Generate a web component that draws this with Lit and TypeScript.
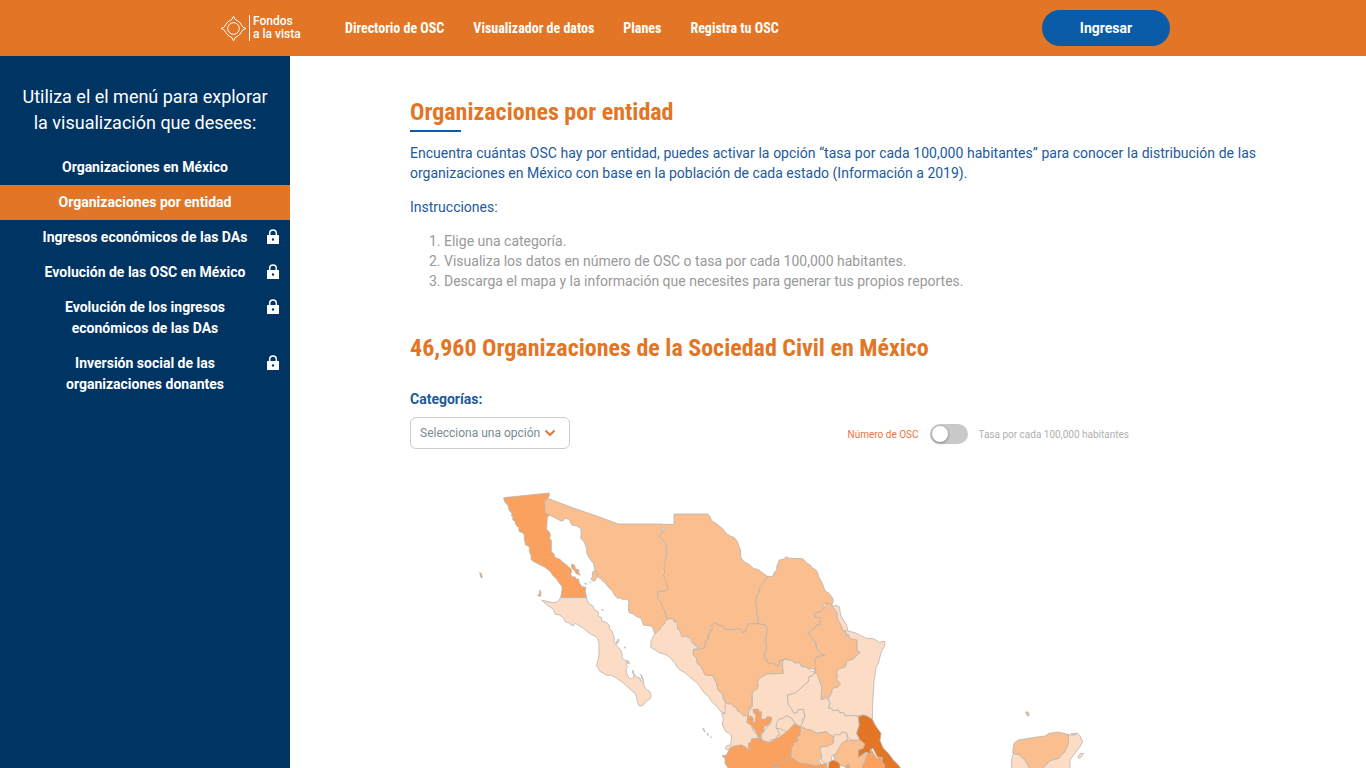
import { LitElement, html, svg, css, nothing } from "lit";
import { customElement, state } from "lit/decorators.js";

type Region = { name: string; level: string; points: string };
type Sheet = { x: number; y: number; regions: Region[] };

// Each sheet of the map keeps its own local origin; one map unit is a third of a pixel.
const SHEETS: Sheet[] = [
  {
    x: 0, y: 0,
    regions: [
      { name: "Base norte", level: "mid base", points: "720,480 750,450 765,428 790,430 865,420 915,430 930,520 970,545 960,580 860,580 760,520" },
      { name: "Base centro", level: "low base", points: "875,635 850,708 810,720 860,800 960,790 1010,730 1100,755 1190,770 1200,710 1090,660 1060,580 900,600" },
      { name: "Sonora", level: "mid", points: "263,55 340,84 410,108 475,132 605,132 608,140 605,150 608,157 600,165 599,172 605,175 608,182 617,188 620,195 618,205 622,208 618,225 620,240 616,243 618,258 614,270 619,290 617,300 622,315 626,328 615,331 603,334 593,336 593,345 600,352 603,364 610,375 613,392 618,400 619,411 624,417 617,424 612,433 602,441 600,448 592,455 585,462 581,453 578,441 568,437 550,435 548,428 543,415 528,409 520,402 507,398 505,380 507,362 500,358 487,358 480,354 473,355 465,347 457,333 448,325 440,315 434,307 427,303 425,298 412,290 405,270 400,250 392,240 385,230 380,218 380,205 372,185 362,175 364,160 362,145 350,138 335,135 330,122 325,117 315,115 310,122 303,123 284,113 268,105 258,102 254,92 252,68" },
      { name: "Baja California", level: "high", points: "131,53 200,46 268,39 268,47 263,55 255,61 252,68 256,80 254,92 258,100 268,105 262,112 261,125 260,148 268,156 271,165 269,176 274,180 274,215 282,222 284,230 290,235 300,238 308,247 320,255 326,262 332,265 335,274 332,283 337,291 345,290 348,297 355,297 358,309 366,320 377,322 376,335 380,353 302,353 306,330 306,320 298,310 290,297 280,288 270,274 255,262 235,252 218,243 213,238 213,225 208,215 208,200 197,195 193,180 193,165 188,158 178,155 176,143 167,134 165,124 158,120 159,110 153,106 157,102 147,90 145,78 138,70 134,66" },
      { name: "Isla Ángel de la Guarda", level: "high", points: "334,254 339,252 345,259 345,266 356,269 357,283 361,286 348,280 344,272 336,265" },
      { name: "Isla Tiburón", level: "mid", points: "400,273 410,275 412,288 407,299 403,304 393,299 397,290 397,278" },
      { name: "Isla Guadalupe", level: "high", points: "59,278 64,280 67,293 63,293" },
      { name: "Isla Cedros", level: "high", points: "240,330 243,338 241,350 233,346 238,342" },
      { name: "Isla San Esteban", level: "mid", points: "374,309 380,312 377,313" },
      { name: "Isla San Pedro", level: "mid", points: "390,305 392,307 390,308" },
      { name: "Isla Tortuga", level: "low", points: "426,388 429,389 428,392" },
      { name: "Baja California Sur", level: "low", points: "302,353 380,353 382,363 386,370 400,379 402,388 415,396 415,408 425,413 424,422 440,428 449,438 448,445 457,455 462,470 463,485 472,500 481,508 486,520 486,533 500,545 499,555 503,560 498,568 500,580 506,593 515,597 522,591 521,580 530,591 540,594 542,603 550,604 552,617 558,628 570,635 573,648 569,658 558,664 551,674 543,678 536,676 532,664 530,652 525,640 515,632 500,618 485,605 470,595 455,586 440,586 430,580 418,573 415,565 409,557 414,540 417,525 417,490 412,475 405,468 390,461 370,445 350,432 345,430 341,437 335,436 325,428 316,425 310,415 300,405 286,403 280,388 262,375 250,365 245,361 280,368 293,365" },
      { name: "Isla Carmen", level: "low", points: "475,477 478,480 474,487 471,492 469,486" },
      { name: "Isla Monserrat", level: "low", points: "493,500 496,502 495,505" },
      { name: "Isla San José", level: "low", points: "500,540 506,543 508,551 503,550" },
      { name: "Isla Espíritu Santo", level: "low", points: "517,570 521,575 519,581" },
      { name: "Isla Cerralvo", level: "low", points: "542,583 547,591 550,602 545,594" },
    ],
  },
  {
    x: 540, y: 60,
    regions: [
      { name: "Chihuahua", level: "mid", points: "102,42 204,42 210,50 215,62 230,71 250,88 258,99 270,108 282,112 292,124 296,138 302,150 302,170 307,180 315,187 327,193 340,205 355,209 382,229 370,248 360,262 356,278 347,295 349,312 352,320 350,330 352,348 357,355 352,373 340,371 325,372 322,381 318,385 316,395 308,398 304,390 293,386 283,390 270,392 262,388 254,388 250,380 238,377 225,368 217,374 212,382 211,395 203,405 203,416 198,420 195,445 184,447 172,443 170,435 159,431 155,415 140,410 125,412 122,405 114,402 112,390 108,386 109,368 102,366 102,357 95,355 91,359 85,355 78,355 78,345 72,328 67,324 64,308 53,295 52,276 70,274 85,268 84,260 78,250 75,235 70,228 74,215 72,205 76,190 75,180 80,170 78,150 80,143 76,125 67,119 60,110 59,102 69,97 67,90 74,94 70,85 63,77 67,73 102,73" },
    ],
  },
  {
    x: 660, y: 420,
    regions: [
      { name: "Sinaloa", level: "low", points: "-36,-3 -24,-4 -20,-2 -18,6 -10,5 -7,18 -8,27 0,32 5,50 18,48 30,55 35,66 44,75 55,85 42,88 40,105 50,114 52,130 64,141 75,163 98,167 109,188 114,210 127,220 130,238 140,250 142,258 135,280 122,275 113,262 95,245 86,230 72,218 60,200 50,188 30,172 15,158 0,150 -8,142 -15,130 -30,112 -42,104 -65,97 -75,89 -88,82 -87,63 -78,45 -75,42 -68,35 -60,28 -58,21 -48,13 -43,4" },
      { name: "Coahuila", level: "mid", points: "262,-131 278,-131 284,-145 291,-149 290,-160 298,-180 312,-183 318,-190 328,-185 368,-184 380,-172 390,-165 398,-156 408,-150 413,-143 415,-132 425,-115 435,-88 447,-80 458,-66 460,-55 455,-45 440,-52 430,-45 430,-32 421,-25 405,-20 405,-8 420,-10 422,2 420,15 409,16 405,24 395,30 385,38 395,50 400,60 407,65 410,85 422,101 435,105 422,111 410,110 404,125 410,135 408,155 399,147 385,145 375,140 365,140 357,128 345,129 335,122 315,118 300,120 295,140 280,130 265,130 252,100 260,90 257,60 262,25 255,15 232,10 237,-5 230,-15 230,-30 227,-65 236,-80 240,-98 250,-109" },
      { name: "Nuevo León", level: "mid", points: "440,-52 450,-50 455,-43 465,-30 472,-20 470,-8 477,0 485,20 488,32 498,32 497,45 505,43 510,56 531,60 531,92 541,97 532,103 520,117 500,123 497,140 477,147 470,155 472,165 470,180 482,190 474,201 457,205 455,220 442,234 432,232 430,238 423,238 425,200 413,170 405,160 408,135 404,125 410,110 435,105 422,101 410,85 407,65 400,60 385,38 395,30 405,24 409,16 420,15 422,-8 405,-8 405,-20 421,-25 430,-32" },
      { name: "Tamaulipas", level: "low", points: "455,-45 460,-42 468,-44 478,-40 482,-15 488,-3 500,15 503,33 525,38 545,48 560,55 580,56 600,68 605,64 615,65 613,80 604,95 595,130 588,142 582,185 580,220 578,250 577,298 560,288 550,285 530,288 515,286 495,288 490,277 480,279 475,270 459,272 455,265 445,265 450,250 445,235 455,220 457,205 474,201 482,190 470,180 472,165 470,155 477,147 497,140 500,123 520,117 541,97 531,92 531,60 510,56 505,43 497,45 498,32 488,32 485,20 472,-5 472,-20" },
      { name: "Durango", level: "mid", points: "40,88 57,89 75,82 76,66 84,59 90,35 97,30 95,15 105,8 118,17 130,17 134,28 150,28 163,30 173,26 184,30 188,38 196,35 198,25 202,21 205,12 232,11 255,15 262,25 257,60 260,90 252,100 251,115 265,130 280,130 295,140 300,125 312,118 308,143 310,160 260,162 240,174 232,185 235,198 230,208 217,217 215,260 205,265 208,272 205,285 190,288 181,277 172,273 170,265 160,260 154,250 145,253 136,245 132,238 130,225 119,214 114,210 109,188 98,167 75,165 64,141 52,130 50,114 40,105" },
      { name: "Zacatecas", level: "low", points: "308,123 315,118 335,122 345,129 357,128 365,140 375,140 385,145 395,154 404,155 397,168 387,170 385,185 360,207 345,220 322,225 325,255 335,266 340,278 350,280 355,268 370,268 375,290 365,300 370,310 362,322 345,310 335,295 320,287 309,295 297,298 295,310 288,320 300,345 292,347 285,358 270,360 268,368 245,360 245,345 260,322 270,315 274,294 262,290 255,298 245,298 240,275 235,268 221,270 205,265 217,260 217,217 230,208 235,198 232,185 240,174 260,162 310,160 308,143" },
      { name: "San Luis Potosí", level: "low", points: "404,158 413,165 419,185 425,200 423,238 432,238 442,234 450,250 445,265 455,265 459,272 475,270 480,279 490,277 495,288 515,286 540,290 535,305 538,315 530,340 540,360 520,361 505,355 500,340 487,335 480,345 465,345 460,350 450,345 440,335 410,340 395,331 380,328 362,320 375,290 370,268 355,268 350,280 340,278 335,266 325,255 322,225 345,220 385,185 387,170 397,168" },
      { name: "Aguascalientes", level: "low", points: "288,325 290,308 297,298 309,295 320,287 335,295 345,310 335,320 328,331 320,335 300,326" },
      { name: "Nayarit", level: "low", points: "136,245 145,253 154,250 160,260 170,265 172,273 181,277 190,288 205,285 201,308 213,315 220,333 235,345 231,355 215,357 213,367 205,370 208,392 200,383 185,375 165,378 155,380 146,390 136,387 140,377 152,375 155,350 148,340 138,335 132,325 127,315 130,295 125,280 135,280" },
      { name: "Michoacán", level: "high", points: "275,435 300,430 305,425 320,418 333,410 345,420 375,430 405,437 440,430 450,500 250,500" },
      { name: "Jalisco", level: "high", points: "126,408 140,404 150,384 165,378 185,375 200,383 208,392 205,370 213,367 215,357 240,355 255,365 268,368 285,358 300,350 320,335 335,320 345,312 362,320 360,345 350,351 355,362 342,370 335,385 333,410 320,418 300,430 275,435 295,442 290,500 160,500 145,445 135,430 135,415" },
      { name: "Jalisco Norte", level: "high", points: "202,290 213,287 220,295 218,305 225,307 228,285 220,278 221,268 235,268 235,277 245,275 242,298 255,298 262,290 275,292 273,305 260,318 252,318 250,335 242,340 241,355 234,350 225,330 214,315 202,308" },
      { name: "Guanajuato", level: "mid", points: "362,320 380,328 395,331 410,340 440,335 450,345 462,350 458,360 460,370 445,378 422,382 425,390 428,405 418,422 425,434 405,437 375,430 360,430 345,420 333,410 335,385 342,370 355,362 350,351 360,345" },
      { name: "Querétaro", level: "low", points: "462,350 467,342 480,345 487,335 500,340 503,360 488,368 485,382 473,390 470,400 455,408 455,425 440,431 425,425 425,410 420,382 445,378 460,370" },
      { name: "Hidalgo", level: "mid", points: "485,370 503,360 530,362 540,360 555,372 550,385 536,390 535,412 555,400 568,405 560,420 545,445 510,447 480,435 465,420 460,407 470,400 473,390" },
      { name: "Estado de México", level: "top", points: "447,427 460,420 475,427 480,435 477,500 440,500" },
      { name: "Tlaxcala", level: "high", points: "498,437 506,432 512,447 512,500 495,500" },
      { name: "Puebla", level: "high", points: "560,405 575,390 584,405 590,415 603,410 606,425 614,435 610,500 545,500 548,435 555,425" },
      { name: "Veracruz", level: "top", points: "535,290 550,285 560,288 577,298 585,315 603,340 600,362 610,385 625,400 640,420 655,435 680,470 705,500 610,500 614,435 606,425 607,412 592,411 584,395 579,385 570,390 572,401 557,397 535,412 536,390 550,385 555,372 540,360 530,340 538,315" },
      { name: "Islas Marías 1", level: "low", points: "68,325 72,328 76,335 72,333" },
      { name: "Islas Marías 2", level: "low", points: "81,340 85,342 84,347" },
      { name: "Islas Marías 3", level: "low", points: "92,350 95,352 93,353" },
    ],
  },
  {
    x: 1590, y: 630,
    regions: [
      { name: "Quintana Roo", level: "low", points: "235,133 242,136 258,134 260,129 270,137 273,145 278,155 270,170 255,190 243,205 240,215 240,232 245,270 160,270 160,234 180,212 205,205 220,190 233,165" },
      { name: "Campeche", level: "low", points: "70,190 85,192 105,210 118,232 122,270 62,270 65,225 65,210" },
      { name: "Yucatán", level: "mid", points: "72,160 85,150 103,147 135,142 165,138 178,130 205,126 220,130 235,133 235,160 225,185 215,193 207,205 193,206 180,212 168,222 163,225 160,234 160,270 120,270 118,232 108,216 103,207 97,203 88,192 78,193 68,188" },
      { name: "Isla Holbox", level: "low", points: "242,132 258,130 252,133" },
      { name: "Cozumel", level: "low", points: "265,199 270,191 281,190 272,203 266,205" },
      { name: "Arrecife Alacranes", level: "mid", points: "107,66 115,66 118,75 114,79 109,73" },
    ],
  },
];

const MENU = [
  { text: "Organizaciones en México", locked: false },
  { text: "Organizaciones por entidad", locked: false, active: true },
  { text: "Ingresos económicos de las DAs", locked: true },
  { text: "Evolución de las OSC en México", locked: true },
  { text: "Evolución de los ingresos económicos de las DAs", locked: true },
  { text: "Inversión social de las organizaciones donantes", locked: true },
];

@customElement("mexico-map")
export class MexicoMap extends LitElement {
  static styles = css`
    :host { display: block; }
    .map { display: block; width: 100%; height: auto; overflow: visible; }
    .region { stroke: #b9b4b0; stroke-width: 2.4; stroke-linejoin: round; }
    .base { stroke: none; }
    .low { fill: #fcdcc4; }
    .mid { fill: #fbbe8f; }
    .high { fill: #fba15f; }
    .top { fill: #e27626; }
  `;
  render() {
    return html`<svg class="map" viewBox="-150 0 2538 900" role="img" aria-label="Mapa de México">
      ${SHEETS.map((s) => svg`<g transform="translate(${s.x} ${s.y})">
        ${s.regions.map((r) => svg`<polygon class="region ${r.level}" points=${r.points} />`)}
      </g>`)}
    </svg>`;
  }
}

@customElement("app-root")
export class AppRoot extends LitElement {
  @state() private perCapita = false;

  static styles = css`
    :host {
      display: flex; flex-direction: column; height: 100vh; overflow: hidden;
      font-family: Roboto, "Liberation Sans", sans-serif; font-size: 14px; color: #999; background: #fff;
    }
    * { box-sizing: border-box; }
    a { color: inherit; text-decoration: none; }
    .header {
      display: flex; align-items: center; flex: none; height: 56px;
      padding: 0 196px 0 220px; background: #e27626; color: #fff;
    }
    .logo { display: flex; align-items: center; width: 125px; flex: none; }
    .mark { display: block; width: 28px; height: 28px; flex: none; }
    .brand { border-left: 1px solid #fff; margin-left: 1px; padding-left: 3px; font-size: 12px; line-height: 13px; font-weight: 500; white-space: nowrap; }
    .nav { display: flex; gap: 29px; flex: 1; font: 700 14px/20px "Roboto Condensed", Roboto, sans-serif; white-space: nowrap; }
    .enter {
      width: 128px; height: 36px; border: 0; border-radius: 18px; background: #0a5ba8; color: #fff;
      font: 700 14px/20px Roboto, sans-serif; cursor: pointer;
    }
    .body { display: flex; flex: 1; min-height: 0; }
    .side { width: 290px; flex: none; background: #003462; color: #fff; text-align: center; padding-top: 28px; }
    .lead { margin: 0 16px 14px; font-size: 18px; line-height: 26px; }
    .menu { list-style: none; margin: 0; padding: 0; }
    .item { display: grid; grid-template-columns: 1fr 14px; padding: 7px 10px 7px 0; font-weight: 700; line-height: 21px; }
    .item.active { background: #e27626; }
    .link { padding: 0 22px 0 46px; text-wrap: balance; }
    .link.full { padding: 0 12px 0 36px; }
    .lock { width: 14px; height: 16px; margin-top: 2px; }
    .main { flex: 1; min-width: 0; overflow-y: auto; scrollbar-width: none; padding: 0 110px 0 120px; }
    .content { max-width: 1000px; padding-top: 41px; }
    .title { margin: 0; color: #e27626; font: 700 24px/30px "Roboto Condensed", Roboto, sans-serif; }
    .rule { width: 51px; height: 2px; border: 0; margin: 3px 0 11px; background: #0a5ba8; }
    .text { margin: 0 0 14px; color: #1c5a9c; line-height: 20px; text-align: justify; }
    .steps { margin: 0 0 42px; padding-left: 34px; line-height: 20px; }
    .controls { display: flex; justify-content: space-between; align-items: flex-end; margin: 26px 0 31px; padding-right: 127px; }
    .field { display: flex; flex-direction: column; gap: 8px; }
    .label { font-weight: 700; line-height: 20px; color: #1c5a9c; }
    .pick { display: grid; width: 160px; }
    .select {
      grid-area: 1 / 1; height: 32px; appearance: none; border: 1px solid #ccc; border-radius: 6px; background: #fff;
      padding: 0 9px; color: #7b8a92; font: 12px/16px Roboto, sans-serif;
    }
    .chevron { grid-area: 1 / 1; width: 12px; height: 8px; align-self: center; justify-self: end; margin-right: 14px; pointer-events: none; }
    .switch { display: flex; align-items: center; gap: 11px; height: 30px; font-size: 10px; color: #b0b0b0; }
    .on { color: #e8743b; }
    .toggle {
      appearance: none; width: 38px; height: 20px; margin: 0; border-radius: 10px; background: #c9c9c9; display: flex;
      align-items: center; padding: 0 2px; cursor: pointer;
    }
    .toggle::before { content: ""; width: 16px; height: 16px; border-radius: 50%; background: #fff; box-shadow: 0 1px 3px #0006; }
    .toggle:checked { justify-content: flex-end; }
  `;

  private lock() {
    return html`<svg class="lock" viewBox="0 0 14 16" aria-hidden="true">
      <path d="M3.7 7V4.300a3.300 3.300 0 0 1 6.600 0V7" fill="none" stroke="#fff" stroke-width="1.500" />
      <path fill="#fff" fill-rule="evenodd" d="M1.500 6h11q.5 0 .5.5v8q0 .5-.5.5h-11q-.5 0-.5-.5v-8q0-.5.5-.5zM7 9.300a1.200 1.200 0 1 0 0 2.400A1.200 1.200 0 0 0 7 9.300z" />
    </svg>`;
  }

  render() {
    return html`
      <header class="header">
        <a class="logo" href="#">
          <svg class="mark" viewBox="0 0 28 28" fill="none" stroke="#fff" aria-hidden="true">
            <circle cx="13.5" cy="14.5" r="5.800" />
            <path d="M13.500 2.200Q14.300 5.800 17.500 6.800A8.800 8.800 0 0 1 21.200 10.500Q22.200 13.700 25.800 14.500Q22.200 15.300 21.200 18.500A8.800 8.800 0 0 1 17.500 22.200Q14.300 23.200 13.500 26.800Q12.700 23.200 9.500 22.200A8.800 8.800 0 0 1 5.800 18.500Q4.800 15.300 1.200 14.500Q4.800 13.700 5.800 10.500A8.800 8.800 0 0 1 9.500 6.800Q12.700 5.800 13.500 2.200z" />
          </svg>
          <span class="brand">Fondos<br />a la vista</span>
        </a>
        <nav class="nav">
          <a href="#">Directorio de OSC</a><a href="#">Visualizador de datos</a><a href="#">Planes</a><a href="#">Registra tu OSC</a>
        </nav>
        <button class="enter">Ingresar</button>
      </header>
      <div class="body">
        <aside class="side">
          <p class="lead">Utiliza el el menú para explorar la visualización que desees:</p>
          <ul class="menu">
            ${MENU.map((m) => html`<li class="item ${m.active ? "active" : ""}">
              <a class="link ${m.text.length < 32 ? "full" : ""}" href="#">${m.text}</a>${m.locked ? this.lock() : nothing}
            </li>`)}
          </ul>
        </aside>
        <main class="main">
          <div class="content">
            <h1 class="title">Organizaciones por entidad</h1>
            <hr class="rule" />
            <p class="text">Encuentra cuántas OSC hay por entidad, puedes activar la opción “tasa por cada 100,000 habitantes” para conocer la distribución de las organizaciones en México con base en la población de cada estado (Información a 2019).</p>
            <p class="text">Instrucciones:</p>
            <ol class="steps">
              <li>Elige una categoría.</li>
              <li>Visualiza los datos en número de OSC o tasa por cada 100,000 habitantes.</li>
              <li>Descarga el mapa y la información que necesites para generar tus propios reportes.</li>
            </ol>
            <h2 class="title">46,960 Organizaciones de la Sociedad Civil en México</h2>
            <div class="controls">
              <div class="field">
                <label class="label" for="category">Categorías:</label>
                <div class="pick">
                  <select class="select" id="category"><option>Selecciona una opción</option></select>
                  <svg class="chevron" viewBox="0 0 12 8" fill="none" stroke="#e8743b" stroke-width="2" aria-hidden="true"><path d="M1.500 1.500 6 6l4.500-4.500" /></svg>
                </div>
              </div>
              <div class="switch">
                <label class="on" for="rate">Número de OSC</label>
                <input class="toggle" id="rate" type="checkbox" .checked=${this.perCapita}
                  @change=${(e: Event) => (this.perCapita = (e.target as HTMLInputElement).checked)} />
                <label for="rate">Tasa por cada 100,000 habitantes</label>
              </div>
            </div>
            <mexico-map></mexico-map>
          </div>
        </main>
      </div>
    `;
  }
}
